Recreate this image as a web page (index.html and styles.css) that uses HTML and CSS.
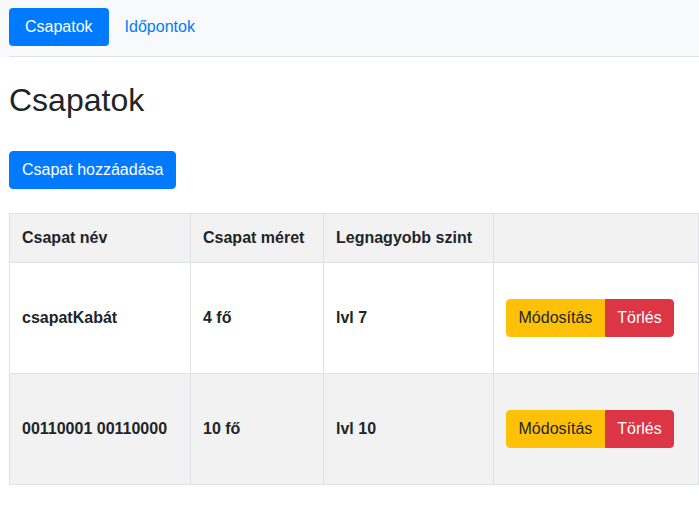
FILE: index.html
```html
<!DOCTYPE html>
<html lang="hu">
<head>
<meta charset="utf-8">
<title>Csapatok</title>
<link rel="stylesheet" href="styles.css">
</head>
<body>
<header class="topbar">
  <nav class="nav">
    <a class="nav-link active" href="#">Csapatok</a>
    <a class="nav-link" href="#">Időpontok</a>
  </nav>
</header>
<main class="content">
  <h1 class="title">Csapatok</h1>
  <button class="btn btn-primary">Csapat hozzáadása</button>
  <table class="table">
    <colgroup>
      <col class="c1"><col class="c2"><col class="c3"><col class="c4">
    </colgroup>
    <thead>
      <tr><th>Csapat név</th><th>Csapat méret</th><th>Legnagyobb szint</th><th></th></tr>
    </thead>
    <tbody>
      <tr>
        <th>csapatKabát</th><th>4 fő</th><th>lvl 7</th>
        <td><div class="btn-group"><button class="btn btn-warning">Módosítás</button><button class="btn btn-danger">Törlés</button></div></td>
      </tr>
      <tr class="striped">
        <th>00110001 00110000</th><th>10 fő</th><th>lvl 10</th>
        <td><div class="btn-group"><button class="btn btn-warning">Módosítás</button><button class="btn btn-danger">Törlés</button></div></td>
      </tr>
    </tbody>
  </table>
</main>
</body>
</html>
```
FILE: styles.css
```css
* { box-sizing: border-box; }
html, body { margin: 0; padding: 0; }
body {
  font-family: "Liberation Sans", Arial, sans-serif;
  font-size: 16px;
  line-height: 1.5;
  color: #212529;
  background: #fff;
}
.topbar {
  background: #f8f9fa;
  padding-left: 9px;
}
.nav {
  display: flex;
  padding: 8px 0 10px;
  border-bottom: 1px solid #dee2e6;
}
.nav-link {
  display: block;
  padding: 7px 16px;
  color: #007bff;
  text-decoration: none;
  border-radius: 4px;
  line-height: 24px;
}
.nav-link.active {
  background: #007bff;
  color: #fff;
}
.content {
  padding-left: 9px;
}
.title {
  font-size: 32px;
  font-weight: 400;
  line-height: 1.2;
  margin: 24px 0 32px;
}
.btn {
  display: inline-block;
  font-family: inherit;
  font-size: 16px;
  line-height: 24px;
  padding: 6px 12px;
  border: 1px solid transparent;
  border-radius: 4px;
  cursor: pointer;
}
.btn-primary { background: #007bff; border-color: #007bff; color: #fff; }
.btn-warning { background: #ffc107; border-color: #ffc107; color: #212529; }
.btn-danger { background: #dc3545; border-color: #dc3545; color: #fff; }
.content > .btn { display: block; margin-bottom: 24px; }
.table {
  border-collapse: collapse;
  width: 689px;
  table-layout: fixed;
}
.c1 { width: 181px; }
.c2 { width: 133px; }
.c3 { width: 170px; }
.c4 { width: 205px; }
.table th, .table td {
  border: 1px solid #dee2e6;
  padding: 12px;
  text-align: left;
  vertical-align: middle;
  font-weight: 700;
}
.table thead th {
  background: #f2f2f2;
  vertical-align: bottom;
}
.table tr.striped th, .table tr.striped td { background: #f2f2f2; }
.btn-group {
  display: flex;
  margin: 24px 0;
}
.btn-group .btn { font-weight: 400; padding: 6px 11.5px; }
.btn-group .btn:first-child { border-top-right-radius: 0; border-bottom-right-radius: 0; }
.btn-group .btn:last-child { border-top-left-radius: 0; border-bottom-left-radius: 0; }
```
